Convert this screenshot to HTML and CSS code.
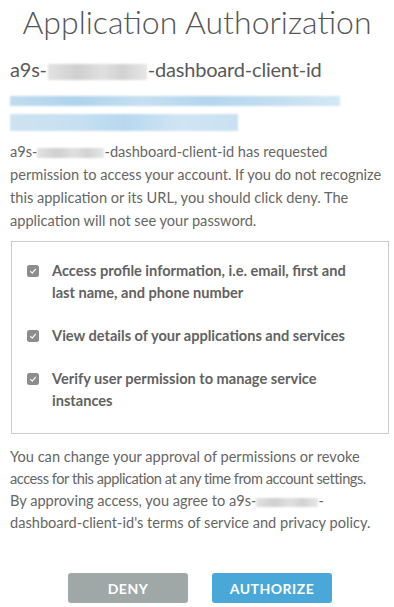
FILE: index.html
```html
<!DOCTYPE html>
<html>
<head>
<meta charset="utf-8">
<link rel="stylesheet" href="styles.css">
</head>
<body>
<main class="page">
  <h1 class="title">Application Authorization</h1>
  <h2 class="client">a9s-<span class="blur blur-title"></span>-dashboard-client-id</h2>
  <div class="links">
    <div class="blur-link link-1"></div>
    <div class="blur-link link-2"></div>
  </div>
  <p class="intro">a9s-<span class="blur blur-inline"></span>-dashboard-client-id has requested<br>permission to access your account. If you do not recognize<br>this application or its URL, you should click deny. The<br>application will not see your password.</p>
  <div class="scopes">
    <label class="scope"><span class="check"><svg viewBox="0 0 12 12" width="12" height="12"><rect x="0" y="0" width="12" height="12" rx="2.5" fill="#8d8d8d"/><path d="M3.3 6.2 L5.2 8.1 L8.8 3.8" fill="none" stroke="#fff" stroke-width="1.1"/></svg></span><span>Access profile information, i.e. email, first and last name, and phone number</span></label>
    <label class="scope"><span class="check"><svg viewBox="0 0 12 12" width="12" height="12"><rect x="0" y="0" width="12" height="12" rx="2.5" fill="#8d8d8d"/><path d="M3.3 6.2 L5.2 8.1 L8.8 3.8" fill="none" stroke="#fff" stroke-width="1.1"/></svg></span><span>View details of your applications and services</span></label>
    <label class="scope"><span class="check"><svg viewBox="0 0 12 12" width="12" height="12"><rect x="0" y="0" width="12" height="12" rx="2.5" fill="#8d8d8d"/><path d="M3.3 6.2 L5.2 8.1 L8.8 3.8" fill="none" stroke="#fff" stroke-width="1.1"/></svg></span><span>Verify user permission to manage service instances</span></label>
  </div>
  <p class="outro">You can change your approval of permissions or revoke<br><span class="tight">access for this application at any time from account settings.</span><br>By approving access, you agree to a9s-<span class="blur blur-inline2"></span>-<br>dashboard-client-id's terms of service and privacy policy.</p>
  <div class="actions">
    <button class="btn btn-deny">DENY</button>
    <button class="btn btn-auth">AUTHORIZE</button>
  </div>
</main>
</body>
</html>
```
FILE: styles.css
```css
html, body {
  margin: 0;
  padding: 0;
  background: #fff;
}
body {
  font-family: "Lato", "Open Sans", sans-serif;
  color: #666;
}
.page {
  width: 394px;
  padding: 0 5px 0 10px;
  box-sizing: border-box;
}
.title {
  margin: 0;
  padding-top: 2px;
  padding-right: 5px;
  font-size: 32px;
  font-weight: 300;
  color: #555;
  text-align: center;
  line-height: 40px;
}
.client {
  margin: 14px 0 0;
  font-size: 20px;
  font-weight: 400;
  letter-spacing: -0.2px;
  color: #5a5a5a;
  line-height: 26px;
}
.blur {
  display: inline-block;
  vertical-align: middle;
  background: linear-gradient(90deg, #e2e2e2, #cfcfcf 30%, #e0e0e0 55%, #d2d2d2 75%, #e6e6e6);
  filter: blur(1px);
}
.blur-title {
  width: 99px;
  height: 16px;
  margin: 0 1px;
}
.blur-inline {
  width: 67px;
  height: 10px;
}
.blur-inline2 {
  width: 62px;
  height: 9px;
}
.links {
  margin-top: 14px;
  display: flex;
  flex-direction: column;
  gap: 8px;
}
.blur-link {
  filter: blur(1px);
}
.link-1 {
  width: 330px;
  height: 10px;
  background: linear-gradient(90deg, #c0dcef, #aed3ec 20%, #c5dff0 40%, #b3d6ee 60%, #c3def0 80%, #d3e8f5);
}
.link-2 {
  width: 228px;
  height: 17px;
  background: linear-gradient(90deg, #cde3f2, #c7e0f1 30%, #b7d8ef 50%, #d0e5f3 75%, #c8e1f2);
}
.intro {
  margin: 9px 0 0;
  font-size: 14.6px;
  line-height: 23px;
  white-space: nowrap;
}
.scopes {
  margin-top: 9px;
  margin-left: 1px;
  border: 1px solid #ccc;
  padding: 18px 16px 21px 15px;
  display: flex;
  flex-direction: column;
  gap: 21px;
}
.scope {
  display: flex;
  align-items: flex-start;
  gap: 13px;
  font-size: 14.6px;
  font-weight: 700;
  line-height: 22px;
  color: #626262;
}
.check {
  flex: none;
  width: 12px;
  height: 12px;
  margin-top: 5px;
  display: flex;
}
.outro {
  margin: 12px 0 0;
  font-size: 14.6px;
  line-height: 22px;
  white-space: nowrap;
}
.tight {
  letter-spacing: -0.45px;
}
.actions {
  margin-top: 39px;
  display: flex;
  justify-content: center;
  gap: 24px;
  padding-left: 1px;
}
.btn {
  width: 120px;
  height: 30px;
  border: none;
  border-radius: 3px;
  color: #fff;
  font-family: "Lato", sans-serif;
  font-weight: 700;
  font-size: 14px;
  letter-spacing: 0.5px;
}
.btn-deny {
  background: #9fa7a7;
}
.btn-auth {
  background: #4aa8d8;
}
```
